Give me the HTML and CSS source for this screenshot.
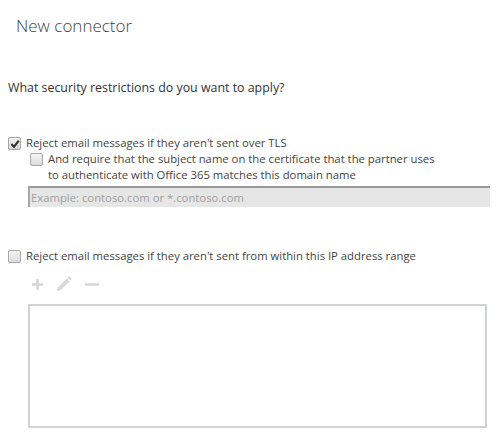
FILE: index.html
```html
<!DOCTYPE html>
<html>
<head>
<meta charset="utf-8">
<link rel="stylesheet" href="styles.css">
</head>
<body>
<div class="page">
  <h1 class="title">New connector</h1>
  <p class="question">What security restrictions do you want to apply?</p>

  <label class="check-row first">
    <span class="box checked"><svg width="10" height="10" viewBox="0 0 10 10"><path d="M1.4 5 L4 7.8 L8.8 1.6" fill="none" stroke="#333" stroke-width="2.2"/></svg></span>
    <span class="label">Reject email messages if they aren't sent over TLS</span>
  </label>
  <div class="sub">
    <label class="check-row">
      <span class="box"></span>
      <span class="label">And require that the subject name on the certificate that the partner uses<br>to authenticate with Office 365 matches this domain name</span>
    </label>
    <div class="input">Example: contoso.com or *.contoso.com</div>
  </div>

  <label class="check-row ip">
    <span class="box"></span>
    <span class="label">Reject email messages if they aren't sent from within this IP address range</span>
  </label>
  <div class="sub">
    <div class="toolbar">
      <svg width="11" height="11" viewBox="0 0 11 11"><path d="M5.5 0V11M0 5.5H11" stroke="#d4d4d4" stroke-width="2.4"/></svg>
      <svg width="16" height="16" viewBox="0 0 16 16"><path d="M2 11.2 L10.8 2.4 L13.6 5.2 L4.8 14 L0.8 15.2 Z" fill="#d8d8d8"/><path d="M11.6 1.6 L12.6 0.6 Q13.2 0.2 13.8 0.8 L15.2 2.2 Q15.8 2.8 15.4 3.4 L14.4 4.4 Z" fill="#d8d8d8"/></svg>
      <svg width="14" height="11" viewBox="0 0 14 11"><path d="M0 5.5H14" stroke="#d4d4d4" stroke-width="2.4"/></svg>
    </div>
    <div class="listbox"></div>
  </div>
</div>
</body>
</html>
```
FILE: styles.css
```css
html, body {
  margin: 0;
  padding: 0;
  background: #fff;
}
body {
  font-family: "Open Sans", "Noto Sans", sans-serif;
  color: #333;
}
.page {
  padding: 0 0 0 8px;
}
.title {
  margin: 0;
  padding: 14px 0 0 8px;
  font-size: 17px;
  font-weight: 300;
  line-height: 24px;
  color: #444;
}
.question {
  margin: 41px 0 0 0;
  font-size: 12.4px;
  line-height: 17px;
  color: #333;
}
.check-row {
  display: flex;
  align-items: flex-start;
  gap: 5px;
  font-size: 11.3px;
  line-height: 16px;
  color: #444;
}
.check-row.first {
  margin-top: 39px;
}
.box {
  flex: none;
  width: 11px;
  height: 11px;
  margin-top: 2px;
  border: 1px solid #a8a8a8;
  border-radius: 2px;
  background: linear-gradient(#f4f4f4, #dcdcdc);
  display: flex;
  align-items: center;
  justify-content: center;
}
.box.checked {
  background: linear-gradient(#f0f0f0, #d8d8d8);
}
.sub {
  padding-left: 22px;
}
.input {
  margin: 3px 0 0 -2px;
  width: 459px;
  height: 19px;
  background: #e6e6e6;
  border-top: 2px solid #999;
  border-left: 2px solid #a8a8a8;
  font-size: 11.3px;
  line-height: 19px;
  color: #a0a0a0;
  padding-left: 1px;
}
.check-row.ip {
  margin-top: 41px;
}
.toolbar {
  margin-top: 12px;
  display: flex;
  align-items: center;
  gap: 13px;
  padding-left: 2px;
  height: 16px;
}
.listbox {
  margin: 12px 0 0 -2px;
  width: 455px;
  height: 120px;
  border: 2px solid #cfd3d3;
}
```
